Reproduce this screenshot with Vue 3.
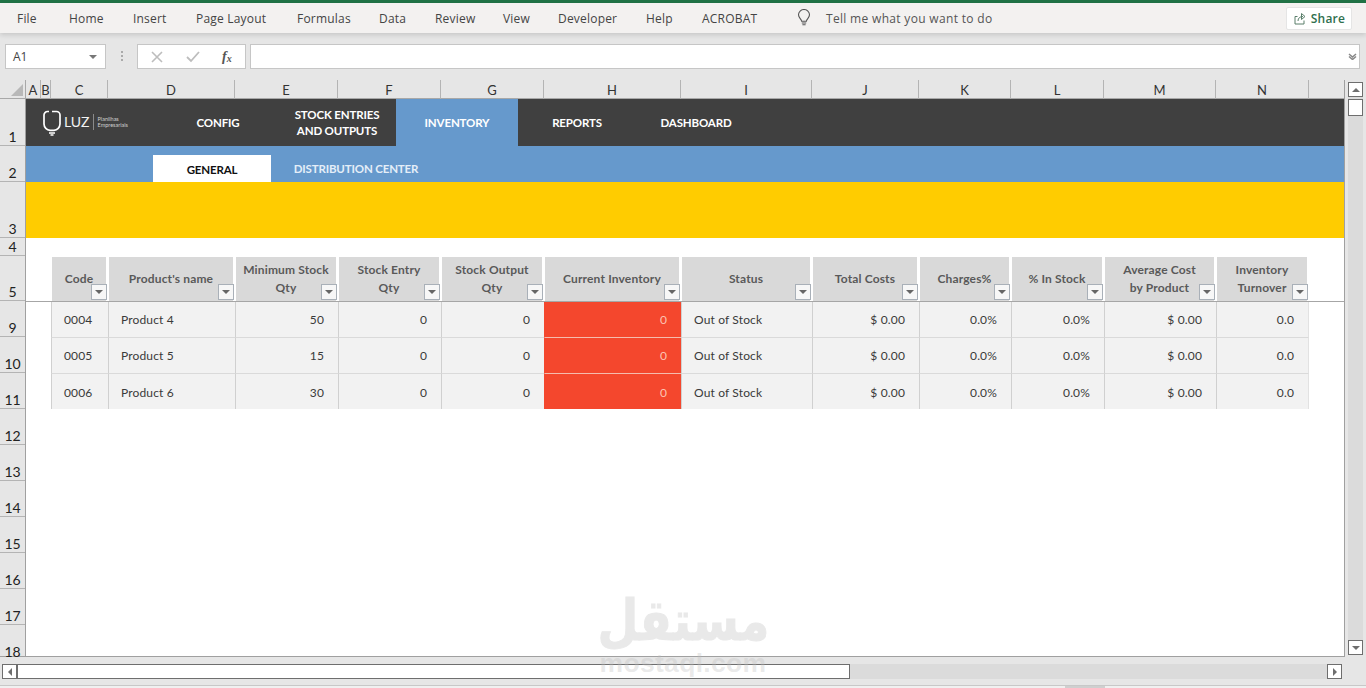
<script setup>
const menu = ['File','Home','Insert','Page Layout','Formulas','Data','Review','View','Developer','Help','ACROBAT']
const letters = ['A','B','C','D','E','F','G','H','I','J','K','L','M','N','']
const rowHeads = [
  { n: 1, h: 47 }, { n: 2, h: 36 }, { n: 3, h: 56 }, { n: 4, h: 18 }, { n: 5, h: 45 },
  { n: 9, h: 36 }, { n: 10, h: 36 }, { n: 11, h: 36 }, { n: 12, h: 36 }, { n: 13, h: 36 },
  { n: 14, h: 36 }, { n: 15, h: 36 }, { n: 16, h: 36 }, { n: 17, h: 36 }, { n: 18, h: 31 }
]
const nav = [
  { lines: ['CONFIG'], w: 120 },
  { lines: ['STOCK ENTRIES', 'AND OUTPUTS'], w: 118 },
  { lines: ['INVENTORY'], w: 122, on: true },
  { lines: ['REPORTS'], w: 118 },
  { lines: ['DASHBOARD'], w: 120 }
]
const heads = [
  ['Code'], ["Product's name"], ['Minimum Stock', 'Qty'], ['Stock Entry', 'Qty'], ['Stock Output', 'Qty'],
  ['Current Inventory'], ['Status'], ['Total Costs'], ['Charges%'], ['% In Stock'],
  ['Average Cost', 'by Product'], ['Inventory', 'Turnover']
]
const rows = [
  ['0004', 'Product 4', '50'],
  ['0005', 'Product 5', '15'],
  ['0006', 'Product 6', '30']
]
</script>

<template>
  <div class="app">
    <div class="greenbar"></div>
    <div class="menubar">
      <div class="menu-items">
        <span v-for="m in menu" :key="m">{{ m }}</span>
      </div>
      <svg class="bulb" width="14" height="18" viewBox="0 0 14 18" fill="none" stroke="#555" stroke-width="1.1">
        <path d="M4.6 12.2C4.4 10 1.5 8.8 1.5 5.8a5.5 5.3 0 0 1 11 0c0 3-2.900 4.200-3.100 6.400z" />
        <path d="M4.800 14h4.400M5.400 15.800h3.200" />
      </svg>
      <span class="tell">Tell me what you want to do</span>
      <div class="share">
        <svg width="13" height="13" viewBox="0 0 13 13" fill="none" stroke="#5a7f6b" stroke-width="1">
          <path d="M3.500 4.500H1v7.500h9V8.500" />
          <path d="M4 9c0-3 2-4.500 5-4.500M7.500 1.500l3.500 3-3.500 3z" />
        </svg>
        <span>Share</span>
      </div>
    </div>

    <div class="formulabar">
      <div class="namebox"><span>A1</span><i class="caret"></i></div>
      <div class="grip"></div>
      <div class="fxbox">
        <svg width="12" height="12" viewBox="0 0 12 12" stroke="#bdbdbd" stroke-width="1.600" fill="none"><path d="M1 1l10 10M11 1L1 11" /></svg>
        <svg width="14" height="12" viewBox="0 0 14 12" stroke="#bdbdbd" stroke-width="1.800" fill="none"><path d="M1 6l4 4 8-9" /></svg>
        <span class="fx">f<sub>x</sub></span>
      </div>
      <div class="formula">
        <svg width="9" height="7" viewBox="0 0 9 7" fill="none" stroke="#888" stroke-width="1.500"><path d="M1 1l3.500 3L8 1M1 3.500l3.500 3 3.500-3" /></svg>
      </div>
    </div>

    <div class="workspace">
      <div class="sheet-wrap">
        <div class="colhead">
          <div class="corner"><i></i></div>
          <div class="letters">
            <div v-for="(l, i) in letters" :key="i" class="letter">{{ l }}</div>
          </div>
        </div>
        <div class="sheet">
          <div class="rowheads">
            <div v-for="r in rowHeads" :key="r.n" class="rowhead" :style="{ height: r.h + 'px' }">{{ r.n }}</div>
          </div>
          <div class="cells">
            <div class="nav">
              <div class="logo">
                <svg width="18" height="26" viewBox="0 0 18 26" fill="none" stroke="#fff" stroke-width="1.700">
                  <path d="M6 1.500H4.500A3.500 3.500 0 0 0 1 5v9a6.500 6.500 0 0 0 6 6.300h4A6.500 6.500 0 0 0 17 14V5a3.500 3.500 0 0 0-3.500-3.500H9" />
                  <path d="M6 23h6M7.500 25h3" />
                </svg>
                <span class="luz">LUZ</span>
                <span class="logosep"></span>
                <span class="tiny">Planilhas<br />Empresariais</span>
              </div>
              <div v-for="n in nav" :key="n.lines[0]" class="navitem" :class="{ on: n.on }" :style="{ width: n.w + 'px' }">
                <span v-for="t in n.lines" :key="t">{{ t }}</span>
              </div>
            </div>
            <div class="subnav">
              <div class="subtab active">GENERAL</div>
              <div class="subtab">DISTRIBUTION CENTER</div>
            </div>
            <div class="yellow"></div>
            <div class="gap4"></div>
            <div class="headrow tablecols">
              <div v-for="h in heads" :key="h[0]" class="hcell">
                <span v-for="t in h" :key="t">{{ t }}</span>
                <div class="filter"><i></i></div>
              </div>
            </div>
            <div v-for="r in rows" :key="r[0]" class="datarow tablecols">
              <div class="dcell left">{{ r[0] }}</div>
              <div class="dcell left">{{ r[1] }}</div>
              <div class="dcell">{{ r[2] }}</div>
              <div class="dcell">0</div>
              <div class="dcell">0</div>
              <div class="dcell red">0</div>
              <div class="dcell left">Out of Stock</div>
              <div class="dcell">$ 0.00</div>
              <div class="dcell">0.0%</div>
              <div class="dcell">0.0%</div>
              <div class="dcell">$ 0.00</div>
              <div class="dcell">0.0</div>
            </div>
          </div>
        </div>
      </div>
      <div class="vscroll">
        <div class="sbtn up"><i></i></div>
        <div class="vtrack"><div class="vthumb"></div></div>
        <div class="sbtn down"><i></i></div>
      </div>
    </div>

    <div class="hscroll">
      <div class="sbtn lf"><i></i></div>
      <div class="hthumb"></div>
      <div class="htrack"></div>
      <div class="sbtn rt"><i></i></div>
    </div>
    <div class="statusline"><i></i></div>

    <div class="watermark">
      <span class="wm-ar">مستقل</span>
      <span class="wm-en">mostaql.com</span>
    </div>
  </div>
</template>

<style>
html, body { margin: 0; padding: 0; background: #fff; overflow: hidden; }
</style>

<style scoped>
.app { width: 1366px; height: 688px; position: relative; overflow: hidden; background: #e6e6e6; font-family: "Open Sans", sans-serif; }
.greenbar { height: 3px; background: #217346; }
.menubar { height: 30px; background: #f3f1f0; display: flex; align-items: center; padding-left: 17px; box-shadow: 0 2px 5px rgba(0,0,0,.14); position: relative; font-size: 12px; color: #444; letter-spacing: .2px; }
.menu-items { display: grid; grid-template-columns: 52px 64px 63px 101px 82px 56px 68px 55px 88px 56px 94px; width: 779px; }
.bulb { margin-left: 1px; }
.tell { margin-left: 15px; color: #555; letter-spacing: .32px; }
.share { margin-left: 294px; width: 66px; height: 23px; box-sizing: border-box; background: #fff; border: 1px solid #e5e5e5; border-radius: 2px; display: flex; align-items: center; justify-content: center; gap: 4px; color: #2f6f4e; font-weight: 600; }
.formulabar { height: 47px; display: flex; padding: 11px 0 0 5px; box-sizing: border-box; }
.namebox { width: 101px; height: 25px; box-sizing: border-box; background: #fff; border: 1px solid #c6c6c6; display: flex; align-items: center; justify-content: space-between; padding: 0 8px 0 7px; font-size: 12px; color: #444; }
.caret { width: 0; height: 0; border-left: 4px solid transparent; border-right: 4px solid transparent; border-top: 4px solid #777; }
.grip { width: 2px; height: 11px; margin: 7px 14px 0 15px; background: repeating-linear-gradient(#aaa 0 2px, transparent 2px 4px); }
.fxbox { width: 109px; height: 25px; box-sizing: border-box; background: #fff; border: 1px solid #c6c6c6; display: flex; align-items: center; padding-left: 13px; gap: 23px; }
.fx { font-family: "Liberation Serif", serif; font-style: italic; font-size: 14px; color: #555; font-weight: 700; margin-left: -1px; }
.fx sub { font-size: 10px; vertical-align: -1px; }
.formula { margin-left: 4px; width: 1110px; height: 25px; box-sizing: border-box; background: #fff; border: 1px solid #c6c6c6; display: flex; align-items: center; justify-content: flex-end; padding-right: 2px; }

.workspace { display: flex; height: 577px; }
.sheet-wrap { width: 1345px; border-right: 1px solid #a0a0a0; box-sizing: border-box; }
.colhead { display: flex; height: 19px; }
.corner { width: 26px; box-sizing: border-box; border-right: 1px solid #a8a8a8; border-bottom: 1px solid #a8a8a8; position: relative; }
.corner i { position: absolute; right: 2px; bottom: 2px; width: 0; height: 0; border-left: 12px solid transparent; border-bottom: 12px solid #b8b8b8; }
.letters { display: grid; flex: 1; grid-template-columns: 15px 10px 57px 127px 103px 103px 103px 137px 131px 107px 92px 93px 112px 93px 1fr; font-family: Lato, sans-serif; font-size: 13px; color: #333; }
.letter { border-right: 1px solid #b4b4b4; border-bottom: 1px solid #a8a8a8; text-align: center; line-height: 21px; height: 19px; box-sizing: border-box; }
.letter:last-child { border-right: none; }

.sheet { display: flex; height: 558px; background: #fff; box-sizing: border-box; border-bottom: 1px solid #a0a0a0; }
.rowheads { width: 26px; flex: none; background: #e6e6e6; border-right: 1px solid #a0a0a0; box-sizing: border-box; font-family: Lato, sans-serif; font-size: 14px; color: #222; }
.rowhead { box-sizing: border-box; border-bottom: 1px solid #b4b4b4; display: flex; align-items: flex-end; justify-content: center; line-height: 16px; }
.rowhead:last-child { border-bottom: none; line-height: 8px; }
.cells { flex: 1; font-family: Lato, sans-serif; background: #fff; min-width: 0; }

.nav { height: 47px; background: #404040; display: flex; color: #fff; font-weight: 700; font-size: 11.500px; letter-spacing: -.15px; }
.logo { width: 132px; box-sizing: border-box; padding: 11px 0 0 17px; display: flex; align-items: flex-start; letter-spacing: 0; }
.luz { font-weight: 400; font-size: 14px; margin: 3px 0 0 3px; color: #f2f2f2; }
.logosep { width: 1px; height: 16px; background: #8a8a8a; margin: 4px 4px 0 3px; }
.tiny { font-weight: 400; font-size: 5.500px; line-height: 6px; color: #cfcfcf; margin-top: 6px; }
.navitem { display: flex; flex-direction: column; align-items: center; justify-content: center; line-height: 16px; padding-top: 1px; box-sizing: border-box; }
.navitem.on { background: #6699cc; }

.subnav { height: 36px; background: #6699cc; display: flex; padding-left: 127px; align-items: flex-end; font-weight: 700; font-size: 11.500px; letter-spacing: -.15px; color: #e4eef8; }
.subtab { height: 27px; width: 170px; text-align: center; line-height: 27px; }
.subtab.active { width: 118px; background: #fff; color: #111; line-height: 30px; }
.yellow { height: 56px; background: #ffcc00; }
.gap4 { height: 18px; }

.tablecols { display: grid; grid-template-columns: 57px 127px 103px 103px 103px 137px 131px 107px 92px 93px 112px 93px; padding-left: 25px; }
.headrow { height: 46px; border-bottom: 1px solid #a6a6a6; box-sizing: border-box; }
.hcell { position: relative; margin: 1px 2px 0 1px; background: #d9d9d9; display: flex; flex-direction: column; align-items: center; justify-content: center; font-weight: 700; font-size: 12px; line-height: 18px; color: #595959; letter-spacing: .15px; padding-bottom: 1px; }
.filter { position: absolute; right: -1px; bottom: 1px; width: 16px; height: 16px; box-sizing: border-box; background: #f7f7f7; border: 1px solid #a9b0b8; display: flex; align-items: center; justify-content: center; }
.filter i { width: 0; height: 0; border-left: 4px solid transparent; border-right: 4px solid transparent; border-top: 4px solid #666; }

.datarow { height: 36px; }
.datarow:last-child { height: 35px; }
.dcell { background: #f2f2f2; border-left: 1px solid #d0d0d0; border-bottom: 1px solid #dadada; box-sizing: border-box; font-size: 12px; letter-spacing: .15px; color: #3a3a3a; display: flex; align-items: center; justify-content: flex-end; padding: 0 14px 0 12px; }
.dcell:last-child { border-right: 1px solid #e2e2e2; }
.dcell.left { justify-content: flex-start; }
.dcell.red { background: #f4472d; color: #fcc3b3; border-left-color: #f4472d; border-bottom-color: #f5bcae; }
.datarow:last-child .dcell { border-bottom: none; padding-top: 1px; }

.vscroll { width: 21px; padding-left: 3px; box-sizing: border-box; display: flex; flex-direction: column; padding-top: 2px; }
.vtrack { width: 15px; height: 543px; background: #dbdbdb; }
.vthumb { width: 15px; height: 17px; box-sizing: border-box; margin-top: 2px; background: #fff; border: 1px solid #6e6e6e; }
.sbtn { width: 15px; height: 15px; box-sizing: border-box; background: #fff; border: 1px solid #6e6e6e; display: flex; align-items: center; justify-content: center; flex: none; }
.sbtn i { width: 0; height: 0; }
.up i { border-left: 4px solid transparent; border-right: 4px solid transparent; border-bottom: 4px solid #6e6e6e; }
.down i { border-left: 4px solid transparent; border-right: 4px solid transparent; border-top: 4px solid #6e6e6e; }
.lf i { border-top: 4px solid transparent; border-bottom: 4px solid transparent; border-right: 4px solid #6e6e6e; }
.rt i { border-top: 4px solid transparent; border-bottom: 4px solid transparent; border-left: 4px solid #6e6e6e; }

.hscroll { display: flex; height: 15px; padding: 7px 0 6px 2px; }
.hthumb { width: 833px; height: 15px; box-sizing: border-box; background: #fff; border: 1px solid #6e6e6e; }
.htrack { width: 477px; height: 15px; background: #dbdbdb; }
.statusline { height: 3px; border-top: 1px solid #c8c8c8; background: #f0f0f0; position: relative; }
.statusline i { position: absolute; left: 1065px; width: 40px; height: 3px; top: 0; background: #cfcfcf; }

.watermark { position: absolute; left: 560px; top: 590px; width: 246px; display: flex; flex-direction: column; align-items: center; pointer-events: none; }
.wm-ar { font-family: "DejaVu Sans", sans-serif; font-weight: 700; font-size: 56px; line-height: 62px; color: #e9e9e9; transform: scaleX(.84); -webkit-text-stroke: 1px #e9e9e9; }
.wm-en { font-family: "Liberation Sans", sans-serif; font-weight: 700; font-size: 26.500px; line-height: 22px; color: rgba(190,190,190,.32); letter-spacing: .3px; }
</style>
